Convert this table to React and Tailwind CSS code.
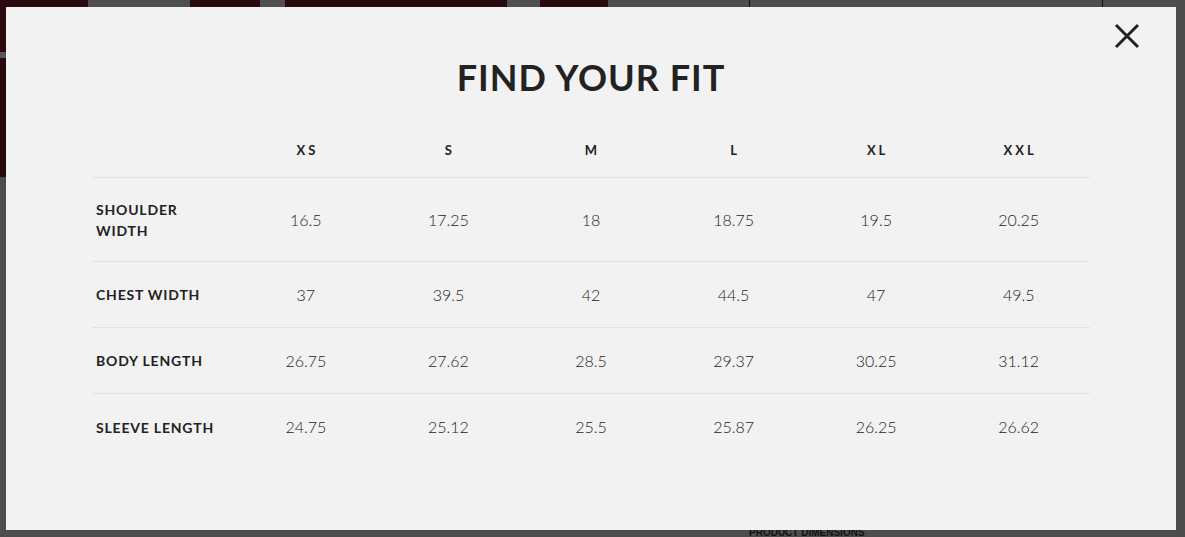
import React from "react";

const sizes = ["XS", "S", "M", "L", "XL", "XXL"];

const rows = [
  { label: ["SHOULDER", "WIDTH"], values: ["16.5", "17.25", "18", "18.75", "19.5", "20.25"] },
  { label: ["CHEST WIDTH"], values: ["37", "39.5", "42", "44.5", "47", "49.5"] },
  { label: ["BODY LENGTH"], values: ["26.75", "27.62", "28.5", "29.37", "30.25", "31.12"] },
  { label: ["SLEEVE LENGTH"], values: ["24.75", "25.12", "25.5", "25.87", "26.25", "26.62"] },
];

const Backdrop = () => (
  <div className="flex h-full flex-col bg-[#4d4d4d]">
    {/* darkened page behind the modal */}
    <div className="flex h-[177px] items-start">
      <div className="flex h-full w-[88px] flex-col">
        <div className="h-[52px] bg-[#2a0a0e]" />
        <div className="h-[6px] bg-[#555]" />
        <div className="flex-1 bg-[#260a0d]" />
      </div>
      <div className="h-[7px] w-[102px] bg-[#4f4f4f]" />
      <div className="h-[7px] w-[70px] bg-[#2a0a0e]" />
      <div className="h-[7px] w-[25px] bg-[#505050]" />
      <div className="h-[7px] w-[222px] bg-[#2c0b10]" />
      <div className="h-[7px] w-[33px] bg-[#505050]" />
      <div className="h-[7px] w-[68px] bg-[#2a0a0e]" />
      <div className="h-[7px] w-[141px] bg-[#4d4d4d]" />
      <div className="h-[7px] w-[353px] border-l border-[#111]" />
      <div className="h-[7px] flex-1 border-l border-[#111]" />
    </div>
    <div className="mt-auto pb-px pl-[749px]">
      <p className="text-[10px] font-bold leading-[7px] text-[#111] [font-family:'Liberation_Sans',sans-serif]">
        PRODUCT DIMENSIONS
      </p>
    </div>
  </div>
);

export default function App() {
  return (
    <div className="relative h-[537px] w-full overflow-hidden">
      <Backdrop />

      <div className="absolute left-[6px] top-[7px] h-[523px] w-[1170px] bg-[#f2f2f2] text-[#222] [font-family:Lato,'Liberation_Sans',sans-serif]">
        <button className="absolute right-[36px] top-[16px] p-0 text-[#222]">
          <svg width="26" height="26" viewBox="0 0 26 26" fill="none">
            <path d="M2 2 L24 24 M24 2 L2 24" stroke="currentColor" strokeWidth="3" />
          </svg>
        </button>

        <h1 className="pt-[50px] text-center text-[36px] font-bold leading-[40px] tracking-[1px]">
          FIND YOUR FIT
        </h1>

        <div className="mx-auto mt-[28px] w-[998px]">
          <div className="grid h-[53px] grid-cols-7 items-center border-b border-[#e2e2e2]">
            <div />
            {sizes.map((s) => (
              <div key={s} className="pl-[3px] text-center text-[13px] font-bold tracking-[3px]">
                {s}
              </div>
            ))}
          </div>

          {rows.map((row, i) => (
            <div
              key={i}
              className={
                "grid grid-cols-7 items-center " +
                (row.label.length > 1 ? "h-[84px] " : "h-[66px] ") +
                (i < rows.length - 1 ? "border-b border-[#e2e2e2]" : "")
              }
            >
              <div className="pl-1 text-[14px] font-bold leading-[21px] tracking-[0.8px]">
                {row.label.map((l) => (
                  <div key={l}>{l}</div>
                ))}
              </div>
              {row.values.map((v, j) => (
                <div key={j} className="text-center text-[16px] font-light text-[#222]">
                  {v}
                </div>
              ))}
            </div>
          ))}
        </div>
      </div>
    </div>
  );
}
